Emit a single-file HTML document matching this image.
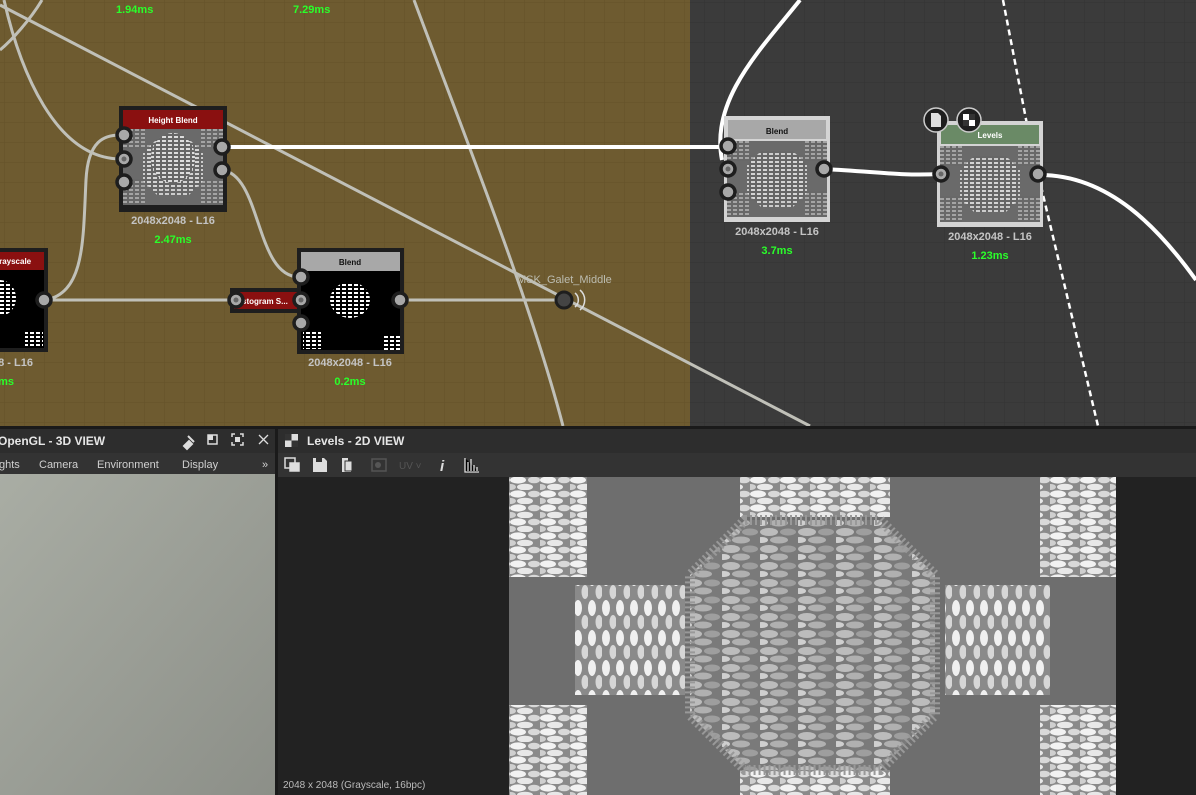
<!DOCTYPE html>
<html><head><meta charset="utf-8"><style>
html,body{margin:0;padding:0;background:#222;overflow:hidden}
svg{display:block}
text{font-family:"Liberation Sans",sans-serif}
</style></head><body>
<svg width="1196" height="795" viewBox="0 0 1196 795" xmlns="http://www.w3.org/2000/svg">
<defs>
<pattern id="gridO" width="20" height="20" patternUnits="userSpaceOnUse" x="5" y="3">
<rect width="20" height="20" fill="#6e5b30"/><path d="M20 0V20M0 20H20" stroke="#645229" stroke-width="1"/></pattern>
<pattern id="gridD" width="20" height="20" patternUnits="userSpaceOnUse" x="5" y="3">
<rect width="20" height="20" fill="#3b3b3b"/><path d="M20 0V20M0 20H20" stroke="#333" stroke-width="1"/></pattern>
<pattern id="peb" width="38" height="17" patternUnits="userSpaceOnUse">
<rect width="38" height="17" fill="#7a7a7a"/>
<ellipse cx="9" cy="5" rx="9" ry="4" fill="#bcbcbc"/><ellipse cx="28" cy="5" rx="8" ry="3.5" fill="#9e9e9e"/>
<ellipse cx="19" cy="13" rx="9" ry="3.5" fill="#b0b0b0"/><ellipse cx="2" cy="13" rx="6" ry="3" fill="#cfcfcf"/></pattern>
<pattern id="pebW" width="30" height="14" patternUnits="userSpaceOnUse">
<rect width="30" height="14" fill="#8a8a8a"/>
<ellipse cx="8" cy="4" rx="8" ry="3.6" fill="#f2f2f2"/><ellipse cx="24" cy="4" rx="6" ry="3.3" fill="#d8d8d8"/>
<ellipse cx="15" cy="11" rx="8" ry="3.3" fill="#e8e8e8"/><ellipse cx="1" cy="11" rx="5" ry="3" fill="#cfcfcf"/></pattern>
<pattern id="pebV" width="14" height="30" patternUnits="userSpaceOnUse">
<rect width="14" height="30" fill="#8a8a8a"/>
<ellipse cx="4" cy="8" rx="4" ry="8" fill="#f0f0f0"/><ellipse cx="11" cy="22" rx="3.5" ry="7" fill="#d6d6d6"/></pattern>
<pattern id="tiny" width="6" height="4" patternUnits="userSpaceOnUse"><rect width="6" height="4" fill="#666"/><rect width="4" height="2" fill="#ddd"/></pattern>
<pattern id="tinyB" width="6" height="4" patternUnits="userSpaceOnUse"><rect width="6" height="4" fill="#000"/><rect width="4" height="2" fill="#fff"/></pattern>
<g id="thumb">
<rect width="100" height="76" fill="#6a6a6a"/>
<rect x="0" y="0" width="100" height="76" fill="url(#tiny)" opacity=".5"/>
<rect x="0" y="20" width="22" height="30" fill="#6a6a6a"/><rect x="78" y="20" width="22" height="30" fill="#6a6a6a"/>
<rect x="22" y="0" width="56" height="14" fill="#6a6a6a"/><rect x="22" y="60" width="56" height="16" fill="#6a6a6a"/>
<path d="M34 10H66L80 24V52L66 66H34L20 52V24Z" fill="url(#tiny)" opacity=".85"/>
</g>
</defs>

<rect x="0" y="0" width="690" height="426" fill="url(#gridO)"/>
<rect x="690" y="0" width="506" height="426" fill="url(#gridD)"/>

<g fill="none" stroke="#c0c0b8" stroke-width="3">
<path d="M0 5 L810 426"/>
<path d="M414 0 C 470 150,530 300,563 426"/>
<path d="M4 0 C 20 70,55 158,120 159"/>
<path d="M42 0 C 30 20,12 40,0 50"/>
<path d="M46 300 C 85 292,83 240,86 180 C 88 140,105 135,120 135"/>
<path d="M222 170 C 262 175,255 278,300 277"/>
<path d="M46 300 H230"/>
<path d="M400 300 H560"/>
</g>
<path d="M222 147 L720 147" stroke="#fff" stroke-width="4" fill="none"/>
<path d="M800 0 C 760 50,710 100,722 160" stroke="#fff" stroke-width="4" fill="none"/>
<path d="M824 169 C 880 172,900 176,940 174" stroke="#fff" stroke-width="4" fill="none"/>
<path d="M1040 175 C 1110 175,1160 230,1196 280" stroke="#fff" stroke-width="4" fill="none"/>
<path d="M1003 0 L1030 140 L1098 426" stroke="#fff" stroke-width="2.5" stroke-dasharray="6,4" fill="none"/>

<text x="116" y="13" fill="#2aff2a" font-size="11" font-weight="bold">1.94ms</text>
<text x="293" y="13" fill="#2aff2a" font-size="11" font-weight="bold">7.29ms</text>

<rect x="119" y="106" width="108" height="106" fill="#1e1e1e"/>
<rect x="123" y="110" width="100" height="19" fill="#8a1010"/>
<text x="173" y="123" fill="#fff" font-size="8" font-weight="bold" text-anchor="middle">Height Blend</text>
<use href="#thumb" x="123" y="129"/>
<ellipse cx="173" cy="158" rx="22" ry="25" fill="url(#tiny)"/>
<text x="173" y="224" fill="#c4c4c4" font-size="11" font-weight="bold" text-anchor="middle">2048x2048 - L16</text>
<text x="173" y="243" fill="#2aff2a" font-size="11" font-weight="bold" text-anchor="middle">2.47ms</text>

<rect x="-10" y="248" width="58" height="104" fill="#1e1e1e"/>
<rect x="-10" y="252" width="54" height="18" fill="#8a1010"/>
<text x="12" y="264" fill="#fff" font-size="8" font-weight="bold" text-anchor="middle">Grayscale</text>
<rect x="-10" y="270" width="54" height="78" fill="#000"/>
<ellipse cx="0" cy="298" rx="16" ry="18" fill="url(#tinyB)"/>
<rect x="25" y="330" width="18" height="18" fill="url(#tinyB)"/>
<text x="-8" y="366" fill="#c4c4c4" font-size="11" font-weight="bold">48 - L16</text>
<text x="-8" y="385" fill="#2aff2a" font-size="11" font-weight="bold">6ms</text>

<rect x="230" y="288" width="70" height="25" fill="#1e1e1e"/>
<rect x="234" y="292" width="66" height="17" fill="#8a1010"/>
<text x="242" y="304" fill="#fff" font-size="8" font-weight="bold">stogram S...</text>

<rect x="297" y="248" width="107" height="106" fill="#1e1e1e"/>
<rect x="301" y="252" width="99" height="19" fill="#a8a8a8"/>
<text x="350" y="265" fill="#111" font-size="8" font-weight="bold" text-anchor="middle">Blend</text>
<rect x="301" y="271" width="99" height="79" fill="#000"/>
<ellipse cx="350" cy="300" rx="20" ry="18" fill="url(#tinyB)"/>
<rect x="303" y="332" width="18" height="17" fill="url(#tinyB)"/>
<rect x="383" y="335" width="17" height="15" fill="url(#tinyB)"/>
<text x="350" y="366" fill="#c4c4c4" font-size="11" font-weight="bold" text-anchor="middle">2048x2048 - L16</text>
<text x="350" y="385" fill="#2aff2a" font-size="11" font-weight="bold" text-anchor="middle">0.2ms</text>

<text x="517" y="283" fill="#bcbcb0" font-size="11">MSK_Galet_Middle</text>
<circle cx="564" cy="300" r="8" fill="#444" stroke="#1e1e1e" stroke-width="3"/>
<path d="M575 293 A9 9 0 0 1 575 307 M580 290 A13 13 0 0 1 580 310" stroke="#ddd" stroke-width="1.5" fill="none"/>

<rect x="724" y="116" width="106" height="106" fill="#d4d4d4"/>
<rect x="728" y="120" width="98" height="19" fill="#a8a8a8"/>
<text x="777" y="134" fill="#111" font-size="8" font-weight="bold" text-anchor="middle">Blend</text>
<use href="#thumb" x="727" y="141"/>
<text x="777" y="235" fill="#c4c4c4" font-size="11" font-weight="bold" text-anchor="middle">2048x2048 - L16</text>
<text x="777" y="254" fill="#2aff2a" font-size="11" font-weight="bold" text-anchor="middle">3.7ms</text>

<rect x="937" y="121" width="106" height="106" fill="#d4d4d4"/>
<rect x="941" y="125" width="98" height="19" fill="#6a8a66"/>
<text x="990" y="138" fill="#fff" font-size="8" font-weight="bold" text-anchor="middle">Levels</text>
<use href="#thumb" x="940" y="146"/>
<text x="990" y="240" fill="#c4c4c4" font-size="11" font-weight="bold" text-anchor="middle">2048x2048 - L16</text>
<text x="990" y="259" fill="#2aff2a" font-size="11" font-weight="bold" text-anchor="middle">1.23ms</text>
<circle cx="936" cy="120" r="12" fill="#1e1e1e" stroke="#ccc" stroke-width="1.5"/>
<path d="M931 113h7l3 3v11h-10z" fill="#ddd"/>
<circle cx="969" cy="120" r="12" fill="#1e1e1e" stroke="#ccc" stroke-width="1.5"/>
<rect x="963" y="114" width="6" height="6" fill="#fff"/><rect x="969" y="120" width="6" height="6" fill="#fff"/>
<rect x="963" y="120" width="6" height="6" fill="#333"/><rect x="969" y="114" width="6" height="6" fill="#333"/>

<g fill="#a8a8a8" stroke="#1e1e1e" stroke-width="3.5">
<circle cx="124" cy="135" r="7"/><circle cx="124" cy="159" r="7"/><circle cx="124" cy="182" r="7"/>
<circle cx="222" cy="147" r="7"/><circle cx="222" cy="170" r="7"/>
<circle cx="44" cy="300" r="7"/>
<circle cx="236" cy="300" r="7"/>
<circle cx="301" cy="277" r="7"/><circle cx="301" cy="300" r="7"/><circle cx="301" cy="323" r="7"/>
<circle cx="400" cy="300" r="7"/>
<circle cx="728" cy="146" r="7"/><circle cx="728" cy="169" r="7"/><circle cx="728" cy="192" r="7"/>
<circle cx="824" cy="169" r="7"/>
<circle cx="941" cy="174" r="7"/><circle cx="1038" cy="174" r="7"/>
</g>
<g fill="#666"><circle cx="124" cy="159" r="2.5"/><circle cx="236" cy="300" r="2.5"/><circle cx="301" cy="300" r="2.5"/><circle cx="728" cy="169" r="2.5"/><circle cx="941" cy="174" r="2.5"/></g>

<rect x="0" y="426" width="1196" height="3" fill="#1a1a1a"/>
<rect x="0" y="429" width="275" height="24" fill="#2d2d2d"/>
<rect x="0" y="453" width="275" height="21" fill="#333"/>
<rect x="275" y="429" width="3" height="366" fill="#1a1a1a"/>
<rect x="278" y="429" width="918" height="24" fill="#2d2d2d"/>
<rect x="278" y="453" width="918" height="24" fill="#333"/>
<defs><linearGradient id="g3d" x1="0" y1="0" x2="1" y2="1"><stop offset="0" stop-color="#a9ada4"/><stop offset="1" stop-color="#8c8f88"/></linearGradient></defs>
<rect x="0" y="474" width="275" height="321" fill="url(#g3d)"/>
<text x="-2" y="445" fill="#e6e6e6" font-size="12" font-weight="bold">OpenGL - 3D VIEW</text>
<path d="M184 446l5-5 3 3-5 5zM188 436l6 6" stroke="#ddd" stroke-width="2" fill="#ddd"/>
<rect x="208" y="435" width="9" height="9" fill="none" stroke="#ddd" stroke-width="1.5"/><rect x="208" y="435" width="5" height="5" fill="#ddd"/>
<path d="M232 437v-3h3M240 434h3v3M243 442v3h-3M235 445h-3v-3" stroke="#ddd" stroke-width="1.5" fill="none"/><rect x="235" y="437" width="5" height="5" fill="#ddd"/>
<path d="M259 435l9 9M268 435l-9 9" stroke="#ddd" stroke-width="1.3"/>
<g fill="#d0d0d0" font-size="11"><text x="-1" y="468">ghts</text><text x="39" y="468">Camera</text><text x="97" y="468">Environment</text><text x="182" y="468">Display</text><text x="262" y="468">»</text></g>

<rect x="285" y="434" width="13" height="13" fill="#ddd"/><rect x="285" y="434" width="6.5" height="6.5" fill="#333"/><rect x="291.5" y="440.5" width="6.5" height="6.5" fill="#333"/>
<text x="307" y="445" fill="#e6e6e6" font-size="12" font-weight="bold">Levels - 2D VIEW</text>
<g fill="none" stroke="#ddd" stroke-width="1.5">
<rect x="285" y="458" width="10" height="10"/><rect x="290" y="463" width="9" height="8" fill="#ddd"/>
</g>
<path d="M313 458h11l3 3v11h-14z" fill="#ddd"/><rect x="316" y="458" width="6" height="4" fill="#333"/>
<path d="M342 458h6v3h3v11h-9z" fill="#ddd"/><rect x="345" y="461" width="7" height="10" fill="#ddd" stroke="#333"/>
<rect x="372" y="459" width="14" height="12" fill="none" stroke="#555" stroke-width="1.5"/><circle cx="378" cy="465" r="3" fill="#555"/>
<text x="399" y="469" fill="#555" font-size="10">UV ˅</text>
<text x="440" y="471" fill="#ddd" font-size="15" font-style="italic" font-weight="bold" font-family="Liberation Serif">i</text>
<path d="M465 458v14h14M468 471v-9M471 471v-12M474 471v-6M477 471v-4" stroke="#ddd" stroke-width="1.3"/>

<rect x="278" y="477" width="918" height="318" fill="#222"/>
<g>
<rect x="509" y="477" width="607" height="318" fill="#6e6e6e"/>
<rect x="509" y="477" width="78" height="100" fill="url(#pebW)"/>
<rect x="1040" y="477" width="76" height="100" fill="url(#pebW)"/>
<rect x="509" y="705" width="78" height="90" fill="url(#pebW)"/>
<rect x="1040" y="705" width="76" height="90" fill="url(#pebW)"/>
<rect x="740" y="477" width="150" height="40" fill="url(#pebW)"/>
<rect x="740" y="770" width="150" height="25" fill="url(#pebW)"/>
<rect x="575" y="585" width="110" height="110" fill="url(#pebV)"/>
<rect x="945" y="585" width="105" height="110" fill="url(#pebV)"/>
<path d="M745 520H880L935 575V715L880 770H745L690 715V575Z" fill="url(#peb)"/>
<path d="M745 520H880L935 575V715L880 770H745L690 715V575Z" fill="none" stroke="#999" stroke-width="10" stroke-dasharray="2,3"/>
</g>
<text x="283" y="788" fill="#bbb" font-size="10">2048 x 2048 (Grayscale, 16bpc)</text>
</svg>
</body></html>
